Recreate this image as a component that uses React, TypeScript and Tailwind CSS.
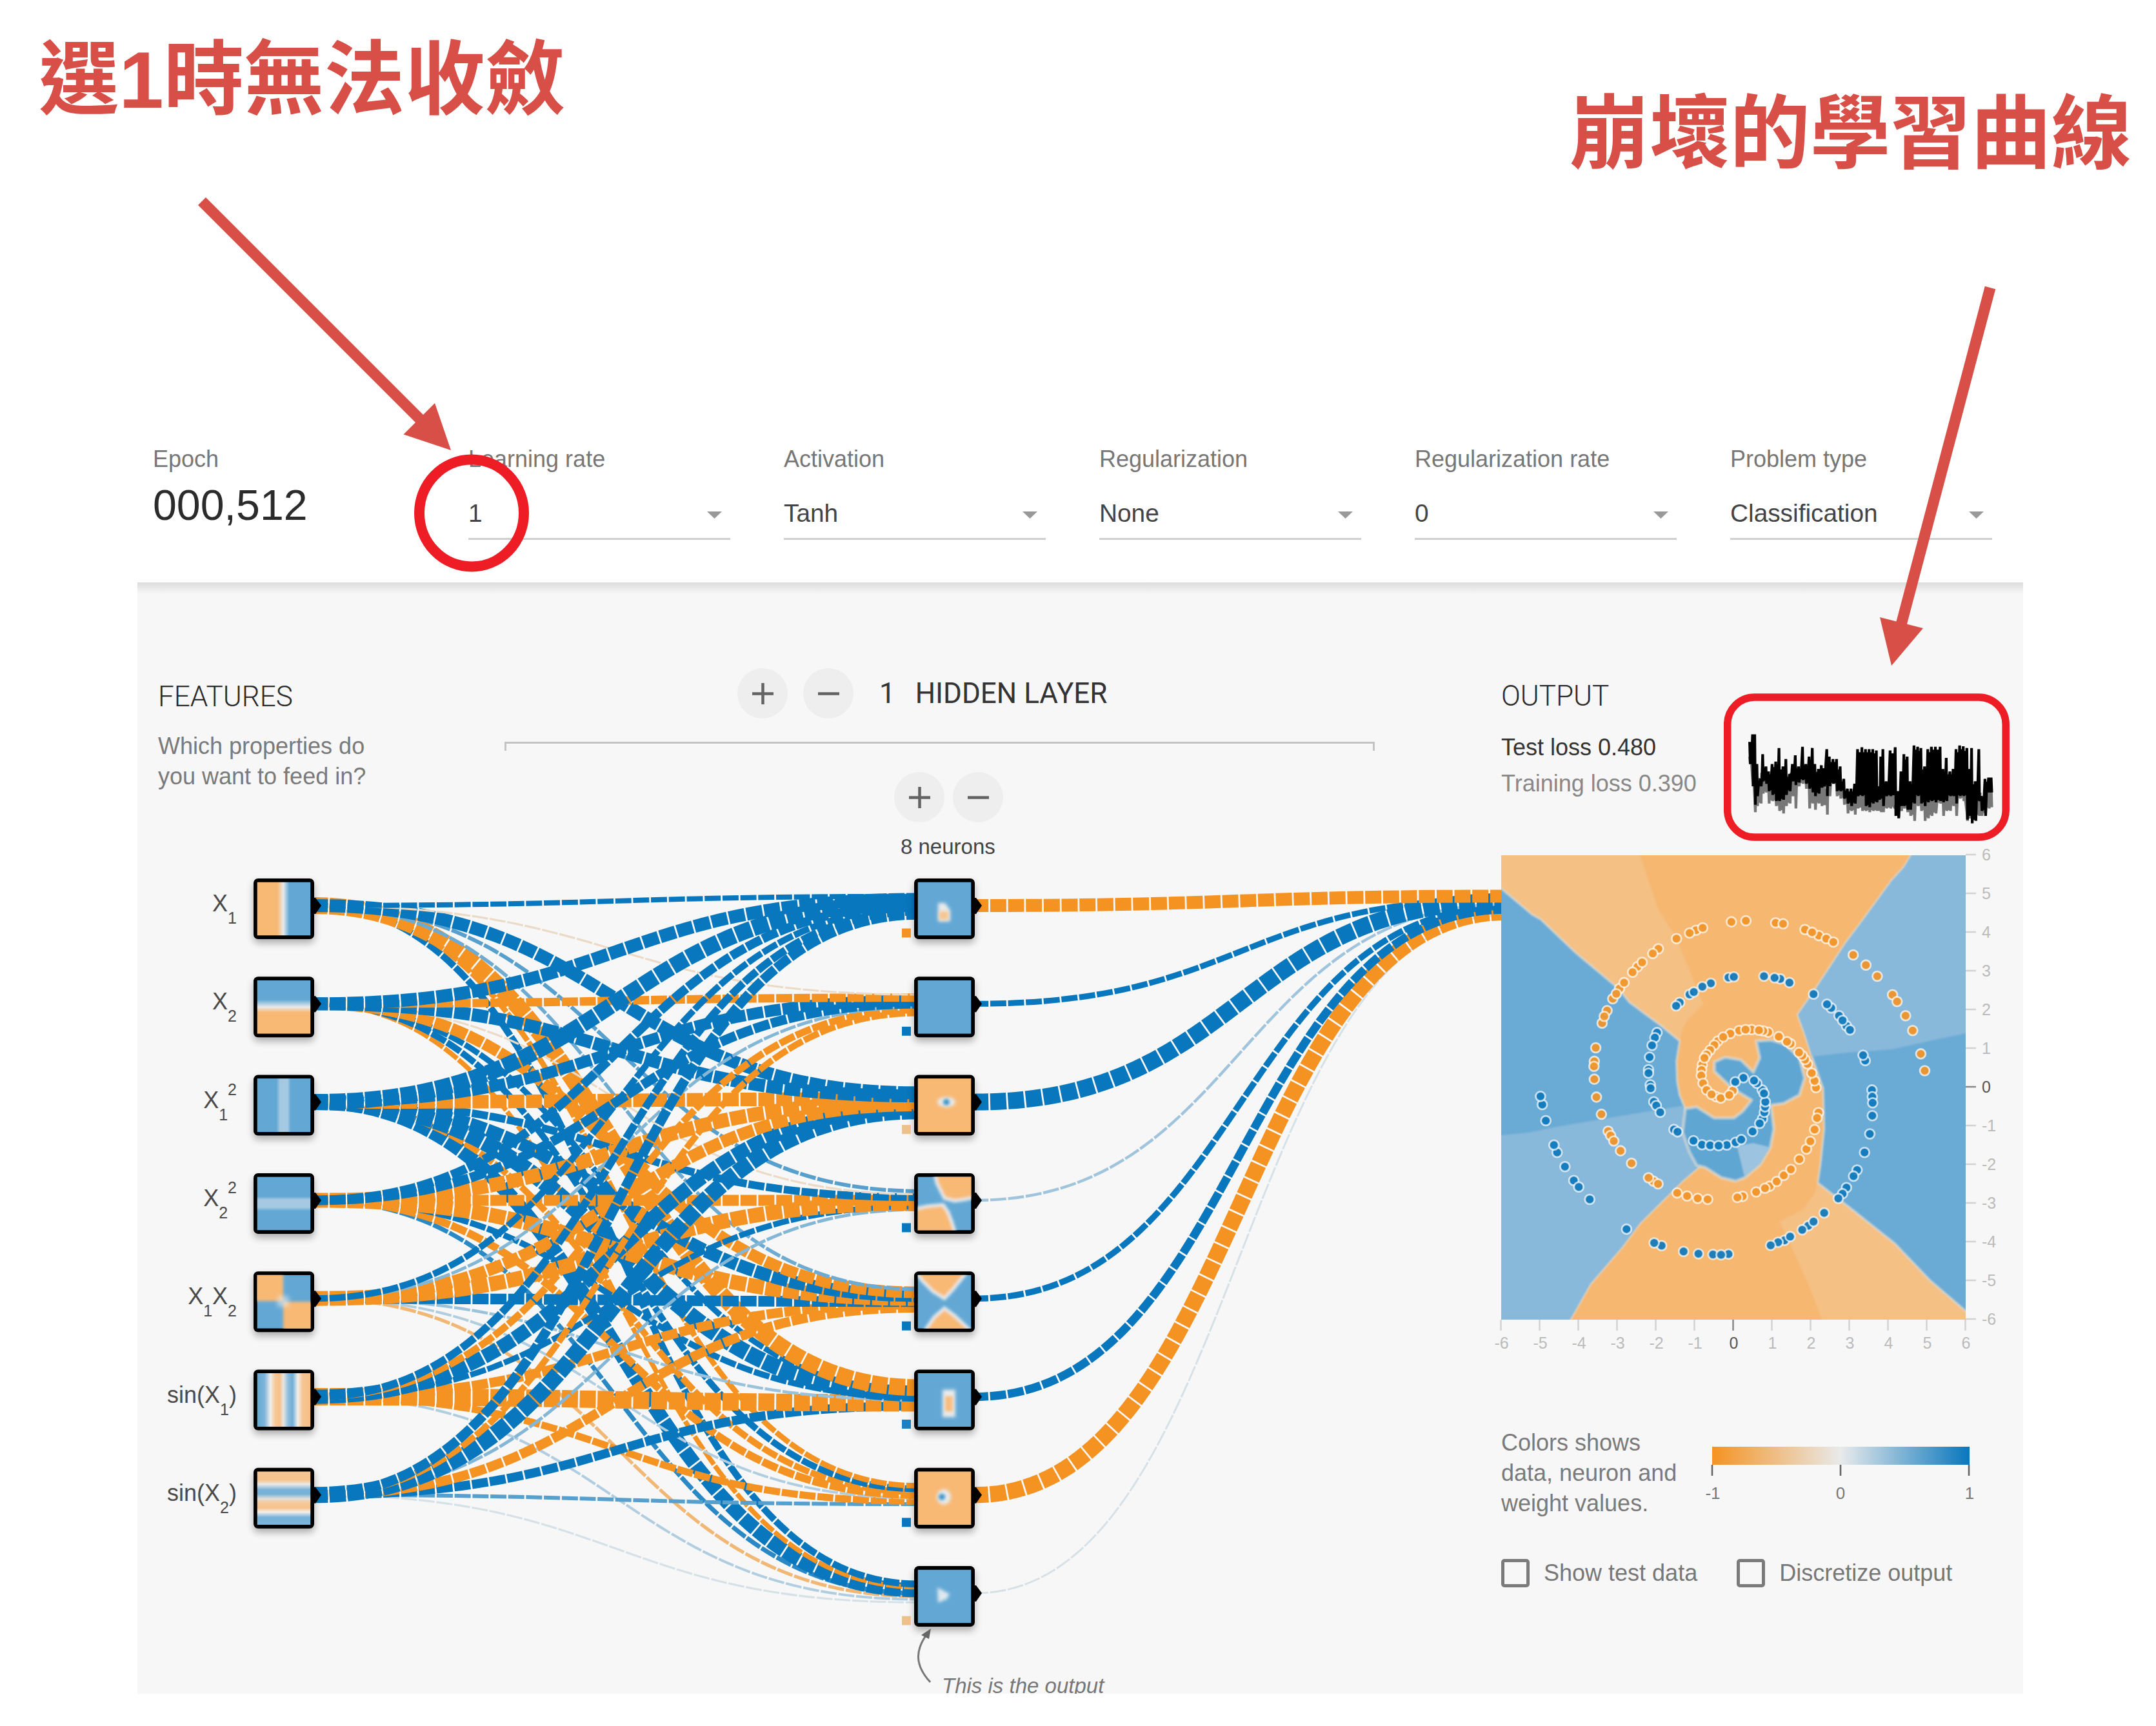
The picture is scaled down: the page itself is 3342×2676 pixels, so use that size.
import React from "react";

const BLUE = "#0877bd";
const ORANGE = "#f59322";
const SOFT_BLUE = "#63a8d5";
const SOFT_ORANGE = "#f8b975";
const NEUTRAL = "#e8eaeb";
const SANS = '"Liberation Sans", Arial, sans-serif';

const UNIT = 2.77;
const rowY = (i: number) => 1404 + 152.3 * i;

/* Signed stroke widths: positive weights are blue, negative ones orange. */
const HIDDEN_LINKS: number[][] = [
  [8, 20, 25, 14, 10, 12, 15],
  [-3.2, -13, 18, 15, 5, -11, -10],
  [20, 20, -21, -22, -19, 22, 25],
  [6, -3.2, 12, -17, -23, 9, 5],
  [5.5, -18, 20, -23, 16.5, -15, -15],
  [-26, 9, 25, 9.5, 4.5, -27, 14],
  [-8.5, 10, -10, -12, 4, -11, 6],
  [10.5, -7.5, 22, 7, -5.2, 4, 3.2],
];
const OUTPUT_LINKS = [-20, 9, 26, 4.4, 9.5, 13, -25, 2.95];

const hex = (s: string) => [1, 3, 5].map((k) => parseInt(s.slice(k, k + 2), 16));
function linkColor(w: number) {
  const a = Math.min(1, Math.max(0.08, ((Math.abs(w) / UNIT - 1) / 9) * 5 + (w < 0 ? 0.1 : 0)));
  const from = hex(NEUTRAL);
  const to = hex(w > 0 ? BLUE : ORANGE);
  return `rgb(${from.map((v, k) => Math.round(v + (to[k] - v) * a)).join(",")})`;
}

function Link({ x1, y1, x2, y2, w }: { x1: number; y1: number; x2: number; y2: number; w: number }) {
  const m = (x1 + x2) / 2;
  return (
    <path
      d={`M${x1},${y1}C${m},${y1} ${m},${y2} ${x2},${y2}`}
      fill="none"
      stroke={linkColor(w)}
      strokeWidth={Math.abs(w)}
      strokeDasharray="24.93 2.77"
      strokeDashoffset={4}
    />
  );
}

function Links() {
  const out: React.ReactNode[] = [];
  OUTPUT_LINKS.forEach((w, i) =>
    out.push(<Link key={`o${i}`} x1={1511} y1={rowY(i)} x2={2335} y2={1404 + (i - 3.5) * 4.155} w={w} />)
  );
  out.reverse();
  for (let i = 7; i >= 0; i--)
    for (let j = 6; j >= 0; j--)
      out.push(
        <Link key={`h${i}-${j}`} x1={487} y1={rowY(j)} x2={1423} y2={rowY(i) + (j - 3) * 4.75} w={HIDDEN_LINKS[i][j]} />
      );
  return <g>{out}</g>;
}

function Thumb({ kind }: { kind: string }) {
  switch (kind) {
    case "x1":
      return <rect width="84" height="84" fill="url(#gx1)" />;
    case "x2":
      return <rect width="84" height="84" fill="url(#gx2)" />;
    case "x1sq":
      return <rect width="84" height="84" fill="url(#gq1)" />;
    case "x2sq":
      return <rect width="84" height="84" fill="url(#gq2)" />;
    case "x1x2":
      return (
        <g>
          <rect width="84" height="84" fill={SOFT_BLUE} />
          <g filter="url(#soft2)">
            <rect x="-10" y="-10" width="51" height="51" fill={SOFT_ORANGE} />
            <rect x="41" y="42" width="60" height="60" fill={SOFT_ORANGE} />
          </g>
          <rect x="32" y="33" width="18" height="17" fill={NEUTRAL} opacity="0.6" filter="url(#soft4)" />
        </g>
      );
    case "sin1":
      return <rect width="84" height="84" fill="url(#gs1)" />;
    case "sin2":
      return <rect width="84" height="84" fill="url(#gs2)" />;
    case "n1":
      return (
        <g>
          <rect width="84" height="84" fill={SOFT_BLUE} />
          <path d="M32,33H43L51,44V62H32Z" fill={NEUTRAL} filter="url(#soft3)" />
          <rect x="34" y="46" width="14" height="13" fill="#f8c48e" filter="url(#soft3)" />
        </g>
      );
    case "n3":
      return (
        <g>
          <rect width="84" height="84" fill={SOFT_ORANGE} />
          <ellipse cx="45" cy="37" rx="14" ry="8" fill={NEUTRAL} filter="url(#soft3)" />
          <circle cx="45" cy="37" r="5" fill="#3f95cc" filter="url(#soft2)" />
        </g>
      );
    case "n4":
      return (
        <g>
          <rect width="84" height="84" fill={SOFT_BLUE} />
          <g filter="url(#soft2)" stroke={NEUTRAL} strokeWidth="5" fill={SOFT_ORANGE}>
            <path d="M26,-8L30,10L42,34L58,38L72,36L92,32V-8Z" />
            <path d="M-8,51L16,46L40,44L48,56L54,72L60,92H-8Z" />
          </g>
        </g>
      );
    case "n5":
      return (
        <g>
          <rect width="84" height="84" fill={SOFT_BLUE} />
          <g filter="url(#soft2)" stroke={NEUTRAL} strokeWidth="5" fill={SOFT_ORANGE}>
            <path d="M-6,-8L8,10L24,26L42,37L56,22L80,-8Z" />
            <path d="M8,92L26,66L42,52L58,64L88,92Z" />
          </g>
        </g>
      );
    case "n6":
      return (
        <g>
          <rect width="84" height="84" fill={SOFT_BLUE} />
          <rect x="39" y="26" width="20" height="43" fill={NEUTRAL} filter="url(#soft3)" />
          <rect x="43" y="36" width="12" height="24" fill="#f8bd80" filter="url(#soft2)" />
        </g>
      );
    case "n7":
      return (
        <g>
          <rect width="84" height="84" fill={SOFT_ORANGE} />
          <ellipse cx="41" cy="40" rx="11" ry="12" fill={NEUTRAL} filter="url(#soft3)" />
          <circle cx="38" cy="40" r="5" fill="#3f95cc" filter="url(#soft2)" />
        </g>
      );
    case "n8":
      return (
        <g>
          <rect width="84" height="84" fill={SOFT_BLUE} />
          <path d="M31,28L50,38L46,46L32,52Z" fill="#dfe9ef" filter="url(#soft3)" />
        </g>
      );
    default:
      return <rect width="84" height="84" fill={SOFT_BLUE} />;
  }
}

function Node({ x, i, kind }: { x: number; i: number; kind: string }) {
  const y = rowY(i) - 42;
  return (
    <g>
      <path d={`M${x + 91},${rowY(i) - 12}h5L${x + 105},${rowY(i)}L${x + 96},${rowY(i) + 13}h-5Z`} fill="#000" />
      <rect x={x} y={y + 6} width="94" height="94" rx="7" fill="#000" opacity="0.3" filter="url(#shadow)" />
      <rect x={x} y={y} width="94" height="94" rx="7" fill="#000" />
      <svg x={x + 5.5} y={y + 5.5} width="83" height="83" viewBox="0 0 84 84">
        <Thumb kind={kind} />
      </svg>
    </g>
  );
}

function FeatureLabel({ i, base, sub, sup, tail }: { i: number; base: string; sub: string; sup?: string; tail?: string }) {
  return (
    <text x="367" y={rowY(i) + 9} textAnchor="end" fontSize="36" fill="#4a4a4a" fontFamily={SANS}>
      {base}
      <tspan fontSize="25" dy="19">{sub}</tspan>
      {sup && <tspan fontSize="25" dy="-39">{sup}</tspan>}
      {tail && <tspan dy="-19">{tail}</tspan>}
    </text>
  );
}

function stops(list: [number, string][]) {
  return list.map(([o, c]) => <stop key={o} offset={`${o}%`} stopColor={c} />);
}

const SIN1: [number, string][] = [
  [0, SOFT_BLUE], [14, "#7fb5da"], [25, "#efeeec"], [34, "#f6c896"], [42, "#f6c08a"], [49, "#e9e5df"], [58, "#8fbedd"], [66, "#6eaed7"], [76, "#f2efea"], [85, "#f6c592"], [100, "#f6bf85"],
];
const SIN2: [number, string][] = [
  [0, "#f6c592"], [16, "#f6c38e"], [24, "#ece9e5"], [34, "#7ab3d9"], [42, "#74b0d8"], [51, "#e3dfd8"], [58, "#f4c99b"], [68, "#f6c28c"], [76, "#f2efea"], [86, "#74b0d8"], [100, "#7fb5da"],
];

function Network() {
  const features = ["x1", "x2", "x1sq", "x2sq", "x1x2", "sin1", "sin2"];
  const hidden = ["n1", "n2", "n3", "n4", "n5", "n6", "n7", "n8"];
  const bias = [ORANGE, BLUE, "#eec08c", BLUE, BLUE, "#1a80c1", BLUE, "#eec08c"];
  return (
    <svg className="absolute left-0 top-0 h-full w-full" viewBox="213 903 2923 1723">
      <defs>
        <linearGradient id="gx1">{stops([[38, SOFT_ORANGE], [49, NEUTRAL], [60, SOFT_BLUE]])}</linearGradient>
        <linearGradient id="gx2" x1="0" y1="0" x2="0" y2="1">{stops([[36, SOFT_BLUE], [50, NEUTRAL], [60, SOFT_ORANGE]])}</linearGradient>
        <linearGradient id="gq1">{stops([[36, SOFT_BLUE], [43, "#a5c9e2"], [57, "#a5c9e2"], [63, SOFT_BLUE]])}</linearGradient>
        <linearGradient id="gq2" x1="0" y1="0" x2="0" y2="1">{stops([[37, SOFT_BLUE], [43, "#a5c9e2"], [57, "#a5c9e2"], [64, SOFT_BLUE]])}</linearGradient>
        <linearGradient id="gs1">{stops(SIN1)}</linearGradient>
        <linearGradient id="gs2" x1="0" y1="0" x2="0" y2="1">{stops(SIN2)}</linearGradient>
        <filter id="soft2" x="-40%" y="-40%" width="180%" height="180%"><feGaussianBlur stdDeviation="2" /></filter>
        <filter id="soft3" x="-60%" y="-60%" width="220%" height="220%"><feGaussianBlur stdDeviation="2.8" /></filter>
        <filter id="soft4" x="-60%" y="-60%" width="220%" height="220%"><feGaussianBlur stdDeviation="4" /></filter>
        <filter id="shadow" x="-20%" y="-20%" width="140%" height="140%"><feGaussianBlur stdDeviation="6" /></filter>
      </defs>
      <Links />
      {features.map((k, i) => <Node key={k} x={393} i={i} kind={k} />)}
      {hidden.map((k, i) => <Node key={k} x={1417} i={i} kind={k} />)}
      {bias.map((c, i) => <rect key={i} x="1398" y={rowY(i) + 35.5} width="14" height="14" fill={c} />)}
      <FeatureLabel i={0} base="X" sub="1" />
      <FeatureLabel i={1} base="X" sub="2" />
      <FeatureLabel i={2} base="X" sub="1" sup="2" />
      <FeatureLabel i={3} base="X" sub="2" sup="2" />
      <text x="367" y={rowY(4) + 9} textAnchor="end" fontSize="36" fill="#4a4a4a" fontFamily={SANS}>
        X<tspan fontSize="25" dy="19">1</tspan><tspan dy="-19">X</tspan><tspan fontSize="25" dy="19">2</tspan>
      </text>
      <FeatureLabel i={5} base="sin(X" sub="1" tail=")" />
      <FeatureLabel i={6} base="sin(X" sub="2" tail=")" />
      <path d="M1442,2608C1418,2582 1418,2558 1438,2532" fill="none" stroke="#777" strokeWidth="3" />
      <path d="M1443,2525L1440,2541L1428,2535Z" fill="#666" />
      <text x="1460" y="2625" fontSize="33" fontStyle="italic" fill="#777" fontFamily={SANS}>This is the output</text>
    </svg>
  );
}

/* Decision surface, drawn in a 1311 x 1375 grid whose origin is (88, 50). */
const px = (x: number) => 2328 + (x - 88) * 0.5489;
const py = (y: number) => 1326 + (y - 50) * 0.5236;

const ORANGE_DOTS = [
  738,247,779,244,863,250,884,253,946,270,985,288,966,278,1006,297,1026,307,1082,345,1118,375,1150,408,1193,463,1206,483,1230,525,1250,569,1273,638,1284,688,
  638,272,657,265,620,280,583,297,532,327,516,341,473,380,486,367,459,396,422,445,435,427,403,475,413,460,387,510,373,547,379,527,355,620,351,660,350,675,351,713,
  357,766,371,817,390,867,397,880,406,896,425,925,456,962,518,1015,504,1005,531,1023,585,1050,613,1059,643,1066,671,1069,770,1060,755,1063,808,1047,846,1030,833,1036,
  866,1016,886,998,906,980,930,950,950,920,961,897,973,862,984,812,980,828,977,738,973,718,953,668,965,695,946,655,938,643,929,634,905,608,895,602,872,587,842,574,
  828,570,795,566,816,568,760,569,778,566,735,578,700,600,715,588,690,612,678,627,668,640,656,670,662,650,654,686,653,702,658,725,668,745,695,765,682,758,708,769,
  742,747,732,760,
];
const BLUE_DOTS = [
  730,412,745,410,830,408,876,416,860,413,902,427,970,461,1020,502,1008,491,1042,525,1063,555,1052,539,1073,567,1116,658,1110,642,1135,745,1136,765,1137,783,1136,821,
  1129,875,1114,930,1093,982,1083,1000,1063,1034,1052,1052,1040,1066,1000,1109,955,1147,970,1135,938,1159,888,1190,904,1179,870,1196,849,1205,730,1231,686,1232,709,1233,
  645,1230,603,1223,541,1206,520,1198,442,1157,338,1069,293,1013,307,1032,268,972,246,930,237,908,214,836,204,788,199,764,680,429,656,439,620,462,632,455,592,486,582,496,
  528,575,522,590,514,613,507,648,504,685,504,695,509,730,510,740,519,780,526,791,537,811,576,862,586,869,655,907,631,895,678,909,725,908,702,910,750,900,766,892,798,868,
  826,830,818,844,831,811,833,795,834,780,825,745,830,755,810,725,802,717,772,709,749,721,
];
function Dots({ data, fill }: { data: number[]; fill: string }) {
  const out = [];
  for (let k = 0; k < data.length; k += 2)
    out.push(<circle key={k} cx={px(data[k])} cy={py(data[k + 1])} r="7.4" fill={fill} stroke="#fff" strokeOpacity="0.7" strokeWidth="2.8" />);
  return <g fillOpacity="0.93">{out}</g>;
}

function Area({ pts, fill, edge }: { pts: number[]; fill: string; edge?: number }) {
  const s = [];
  for (let k = 0; k < pts.length; k += 2) s.push(`${px(pts[k])},${py(pts[k + 1])}`);
  return (
    <polygon
      points={s.join(" ")}
      fill={fill}
      stroke={edge ? "#e0dfd9" : fill}
      strokeOpacity={edge ? 0.6 : 1}
      strokeWidth={edge || 1}
      strokeLinejoin="round"
    />
  );
}

function OutputPlot() {
  const ticks = [-6, -5, -4, -3, -2, -1, 0, 1, 2, 3, 4, 5, 6];
  return (
    <svg className="-ml-7 mt-[67px] h-[800px] w-[836px] shrink-0" viewBox="2300 1310 836 800">
      <defs>
        <clipPath id="plot"><rect x="2328" y="1326" width="720" height="720" /></clipPath>
        <filter id="blurEdge"><feGaussianBlur stdDeviation="0.9" /></filter>
      </defs>
      <g clipPath="url(#plot)">
        <rect x="2328" y="1326" width="720" height="720" fill="#f6b771" />
        <g filter="url(#blurEdge)">
          <Area fill="#f4c083" pts={[60,20,470,20,480,50,530,210,580,290,630,420,658,490,620,530,600,560,592,600,540,555,450,485,420,445,300,340,60,125]} />
          <Area fill="#f4c083" pts={[982,1020,1080,1100,1200,1200,1300,1310,1420,1418,1420,1445,1002,1445,960,1330,905,1200,875,1135,940,1100,975,1050]} />
          <Area edge={3.6} fill="#6aabd5" pts={[60,122,88,148,175,225,200,240,300,340,420,445,450,485,540,555,592,600,583,660,585,720,592,760,606,795,612,830,600,870,620,930,650,970,600,1015,480,1140,430,1210,340,1320,275,1440,60,1440]} />
          <Area fill="#88b8da" pts={[60,884,88,880,165,872,240,856,430,822,600,793,612,830,602,870,620,930,647,970,600,1012,480,1137,430,1207,339,1317,273,1440,60,1440]} />
          <Area edge={3.6} fill="#6aabd5" pts={[1252,38,1245,50,1225,85,1190,125,1110,240,1060,310,985,430,925,522,945,580,965,645,980,690,997,740,1000,860,990,960,982,1020,1080,1100,1200,1200,1300,1310,1420,1418,1420,38]} />
          <Area fill="#88b8da" pts={[1255,38,1247,52,1227,87,1192,127,1112,242,1062,312,987,432,928,522,948,580,967,645,1050,635,1190,624,1310,596,1420,572,1420,38]} />
          <Area edge={5} fill="#61a6d3" pts={[690,690,690,662,720,648,765,656,800,692,818,650,808,600,850,597,890,610,930,650,945,710,930,760,885,785,850,790,858,860,848,915,820,965,775,1005,750,1015,710,1005,665,975,640,968,620,930,600,870,608,800,640,795,690,828,745,828,770,808,795,775,740,740]} />
          <Area fill="#9cc3df" pts={[755,912,800,903,845,915,818,962,775,998]} />
        </g>
        <Dots data={ORANGE_DOTS} fill="#f09429" />
        <Dots data={BLUE_DOTS} fill="#0f78bb" />
      </g>
      {ticks.map((t) => {
        const x = 2687.5 + t * 60;
        const y = 1685 - t * 60;
        const strong = t === 0;
        return (
          <g key={t} fontSize="25" fontFamily={SANS} fill={strong ? "#555" : "#bbb"}>
            <path d={`M${x},2046v17M3048,${y}h16`} stroke={strong ? "#888" : "#d2d2d2"} strokeWidth="2.5" />
            <text x={x + 1} y="2091" textAnchor="middle">{t}</text>
            <text x="3073" y={y + 9}>{t}</text>
          </g>
        );
      })}
    </svg>
  );
}

/* x, top, bottom of the test curve, bottom of the training curve */
const LOSS = [
  770,340,430,430, 778,310,520,520, 784,310,595,625, 790,430,560,600, 800,490,520,590, 806,390,500,550, 815,440,510,545, 822,460,540,590, 832,430,555,580, 842,420,580,600,
  851,365,580,620, 862,440,575,630, 870,410,555,600, 880,470,540,590, 888,430,500,560, 896,395,515,610, 905,440,505,520, 916,360,495,510, 925,430,510,530, 934,400,530,610,
  943,365,545,590, 950,430,560,615, 960,450,550,590, 968,435,525,600, 983,370,560,635, 990,400,520,560, 1000,410,510,505, 1010,410,540,560, 1020,440,540,570, 1030,490,570,595,
  1040,530,590,630, 1050,530,600,620, 1060,510,590,635, 1068,370,560,610, 1080,362,560,620, 1090,370,600,620, 1100,370,605,625, 1110,370,590,620, 1120,375,585,620, 1127,520,575,620,
  1132,400,570,625, 1138,370,600,625, 1147,500,560,610, 1158,375,560,610, 1172,362,640,600, 1180,540,650,645, 1188,460,600,620, 1196,390,600,610, 1205,400,615,625, 1213,500,615,640,
  1224,355,590,660, 1234,360,560,600, 1243,365,590,620, 1253,440,600,660, 1262,370,585,650, 1272,360,580,640, 1283,360,585,630, 1296,360,580,590, 1304,450,585,640, 1313,405,580,620,
  1323,460,560,620, 1332,450,560,600, 1340,370,590,640, 1350,355,560,570, 1360,358,560,580, 1370,365,655,660, 1376,450,640,650, 1383,365,670,650, 1393,500,660,650, 1403,370,580,640,
  1410,560,620,640, 1420,490,640,630, 1430,485,545,610, 1437,485,545,605,
];
function LossChart() {
  const test: string[] = [];
  const train: string[] = [];
  const X = (v: number) => 2280 + v * 0.5612;
  const Y = (v: number) => 1020 + v * 0.3827;
  for (let k = 0; k < LOSS.length; k += 4) {
    const n = Math.min(k + 4, LOSS.length - 4);
    const x = X(LOSS[k]);
    const mid = (x + X(LOSS[n])) / 2;
    const midTop = Math.max(LOSS[k + 1], LOSS[n + 1]) + 12;
    const midBottom = Math.min(LOSS[k + 2], LOSS[n + 2]) - 4;
    const midTrain = Math.min(LOSS[k + 3], LOSS[n + 3]) - 4;
    test.push(`${x},${Y(LOSS[k + 1])}`, `${x + 1},${Y(LOSS[k + 2])}`, `${mid},${Y(midTop)}`, `${mid + 0.5},${Y(midBottom)}`);
    train.push(`${x},${Y(LOSS[k + 2] - 30)}`, `${x + 1},${Y(LOSS[k + 3])}`, `${mid},${Y(midBottom - 30)}`, `${mid + 0.5},${Y(midTrain)}`);
  }
  return (
    <svg className="absolute left-[2459px] top-[172px] h-[229px] w-[443px]" viewBox="2672 1075 443 229">
      <polyline points={train.join(" ")} fill="none" stroke="#777" strokeWidth="4.2" strokeLinejoin="bevel" />
      <polyline points={test.join(" ")} fill="none" stroke="#000" strokeWidth="4.2" strokeLinejoin="bevel" />
      <rect x="2677.7" y="1081" width="431.5" height="217" rx="42" fill="none" stroke="#ee1c25" strokeWidth="11.5" />
    </svg>
  );
}

function Select({ label, value }: { label: string; value: string }) {
  return (
    <div className="w-[406px]">
      <div className="text-[36px] leading-[44px] text-[#777]">{label}</div>
      <div className="mt-[38px] flex items-center justify-between border-b-[3px] border-[#cfcfcf] pb-[14px] pr-[13px] text-[38.8px] leading-[48px] text-[#444]">
        <span>{value}</span>
        <svg className="mt-1 h-[11px] w-[23px]" viewBox="0 0 23 11"><path d="M0,0H23L11.5,11Z" fill="#999" /></svg>
      </div>
    </div>
  );
}

function RoundButton({ minus }: { minus?: boolean }) {
  return (
    <div className="flex h-[78px] w-[78px] items-center justify-center rounded-full bg-[#eeeeee]">
      <svg className="h-[33px] w-[33px]" viewBox="0 0 33 33">
        <path d={minus ? "M0,16.5H33" : "M0,16.5H33M16.5,0V33"} stroke="#636363" strokeWidth="4.5" />
      </svg>
    </div>
  );
}

function Checkbox({ label }: { label: string }) {
  return (
    <div className="flex items-center gap-[22px]">
      <div className="h-[44px] w-[44px] rounded-[5px] border-[5px] border-[#7b7b7b]" />
      <span className="text-[36px] leading-[44px] text-[#777]">{label}</span>
    </div>
  );
}

export default function App() {
  return (
    <div className="relative flex h-[2676px] w-[3342px] flex-col overflow-hidden bg-white font-['Liberation_Sans',Arial,sans-serif]">
      <div className="flex h-[690px] shrink-0 items-start justify-between pl-[60px] pr-[38px] font-['Liberation_Sans','Noto_Sans_CJK_TC',sans-serif] text-[124.5px] font-bold leading-[150px] text-[#d84f48]">
        <h1 className="mt-[49px] whitespace-nowrap">選1時無法收斂</h1>
        <h1 className="mt-[133px] whitespace-nowrap">崩壞的學習曲線</h1>
      </div>

      <div className="flex h-[213px] shrink-0 pl-[237px]">
        <div className="w-[489px]">
          <div className="text-[36px] leading-[44px] text-[#777]">Epoch</div>
          <div className="mt-[9px] text-[66.3px] leading-[80px] text-[#2b2b2b]">000,512</div>
        </div>
        <div className="flex gap-[83px]">
          <Select label="Learning rate" value="1" />
          <Select label="Activation" value="Tanh" />
          <Select label="Regularization" value="None" />
          <Select label="Regularization rate" value="0" />
          <Select label="Problem type" value="Classification" />
        </div>
      </div>

      <div className="relative ml-[213px] h-[1723px] w-[2923px] shrink-0 overflow-hidden bg-[#f7f7f7]">
        <div className="absolute inset-x-0 top-0 h-[18px] bg-linear-to-b from-[#dcdcdc] to-[#f7f7f7]" />
        <Network />
        <div className="relative flex h-full pl-8">
          <div className="w-[537px] pt-[151px]">
            <h2 className="font-['Roboto',sans-serif] text-[44px] font-light leading-[52px] text-[#2a2a2a]">FEATURES</h2>
            <p className="mt-[27px] text-[36px] leading-[47px] text-[#7a7a7a]">
              Which properties do
              <br />
              you want to feed in?
            </p>
          </div>

          <div className="w-[1349px] pt-[133px]">
            <div className="flex items-center pl-[361px]">
              <RoundButton />
              <div className="ml-[24px]"><RoundButton minus /></div>
              <div className="ml-[40px] flex gap-[31px] font-['Roboto',sans-serif] text-[44px] leading-[52px] text-[#333]">
                <span>1</span>
                <span className="whitespace-nowrap">HIDDEN LAYER</span>
              </div>
            </div>
            <div className="mt-[36px] h-[14px] border-x-[3px] border-t-[3px] border-[#c4c4c4]" />
            <div className="mt-[33px] flex gap-[13px] pl-[604px]">
              <RoundButton />
              <RoundButton minus />
            </div>
            <div className="mt-[16px] pl-[614px] text-[33px] leading-[44px] text-[#444]">8 neurons</div>
          </div>

          <div className="ml-[196px] flex w-[809px] flex-col pt-[150px]">
            <h2 className="font-['Roboto',sans-serif] text-[44px] font-light leading-[52px] text-[#2a2a2a]">OUTPUT</h2>
            <div className="mt-[26px] text-[36px] leading-[56px] text-[#333]">Test loss 0.480</div>
            <div className="text-[36px] leading-[56px] text-[#888]">Training loss 0.390</div>
            <OutputPlot />
            <div className="mt-[103px] flex">
              <p className="w-[310px] text-[36px] leading-[47px] text-[#7a7a7a]">
                Colors shows
                <br />
                data, neuron and
                <br />
                weight values.
              </p>
              <svg className="mt-[20px] h-[110px] w-[440px]" viewBox="2638 2232 440 110">
                <defs>
                  <linearGradient id="legend">{stops([[0, ORANGE], [50, NEUTRAL], [100, BLUE]])}</linearGradient>
                </defs>
                <rect x="2655" y="2242" width="399" height="28" fill="url(#legend)" />
                <path d="M2655,2270v17M2854,2270v17M3053,2270v17" stroke="#666" strokeWidth="2.6" />
                <g fontSize="26" fill="#777" textAnchor="middle" fontFamily={SANS}>
                  <text x="2656" y="2323">-1</text>
                  <text x="2854" y="2323">0</text>
                  <text x="3054" y="2323">1</text>
                </g>
              </svg>
            </div>
            <div className="mt-[63px] flex gap-[61px]">
              <Checkbox label="Show test data" />
              <Checkbox label="Discretize output" />
            </div>
          </div>
        </div>
        <LossChart />
      </div>

      <svg className="absolute left-0 top-0 h-[1100px] w-[3342px]" viewBox="0 0 3342 1100">
        <ellipse cx="731" cy="795.5" rx="81" ry="83" fill="none" stroke="#ee1c25" strokeWidth="16" />
        <g fill="#d84f48" stroke="#d84f48">
          <path d="M313,312L655,654" fill="none" strokeWidth="17" />
          <path d="M699,698L674,625L625.5,673.5Z" stroke="none" />
          <path d="M3085,446L2946,972" fill="none" strokeWidth="17" />
          <path d="M2932,1032L2914,957L2981,974Z" stroke="none" />
        </g>
      </svg>
    </div>
  );
}
